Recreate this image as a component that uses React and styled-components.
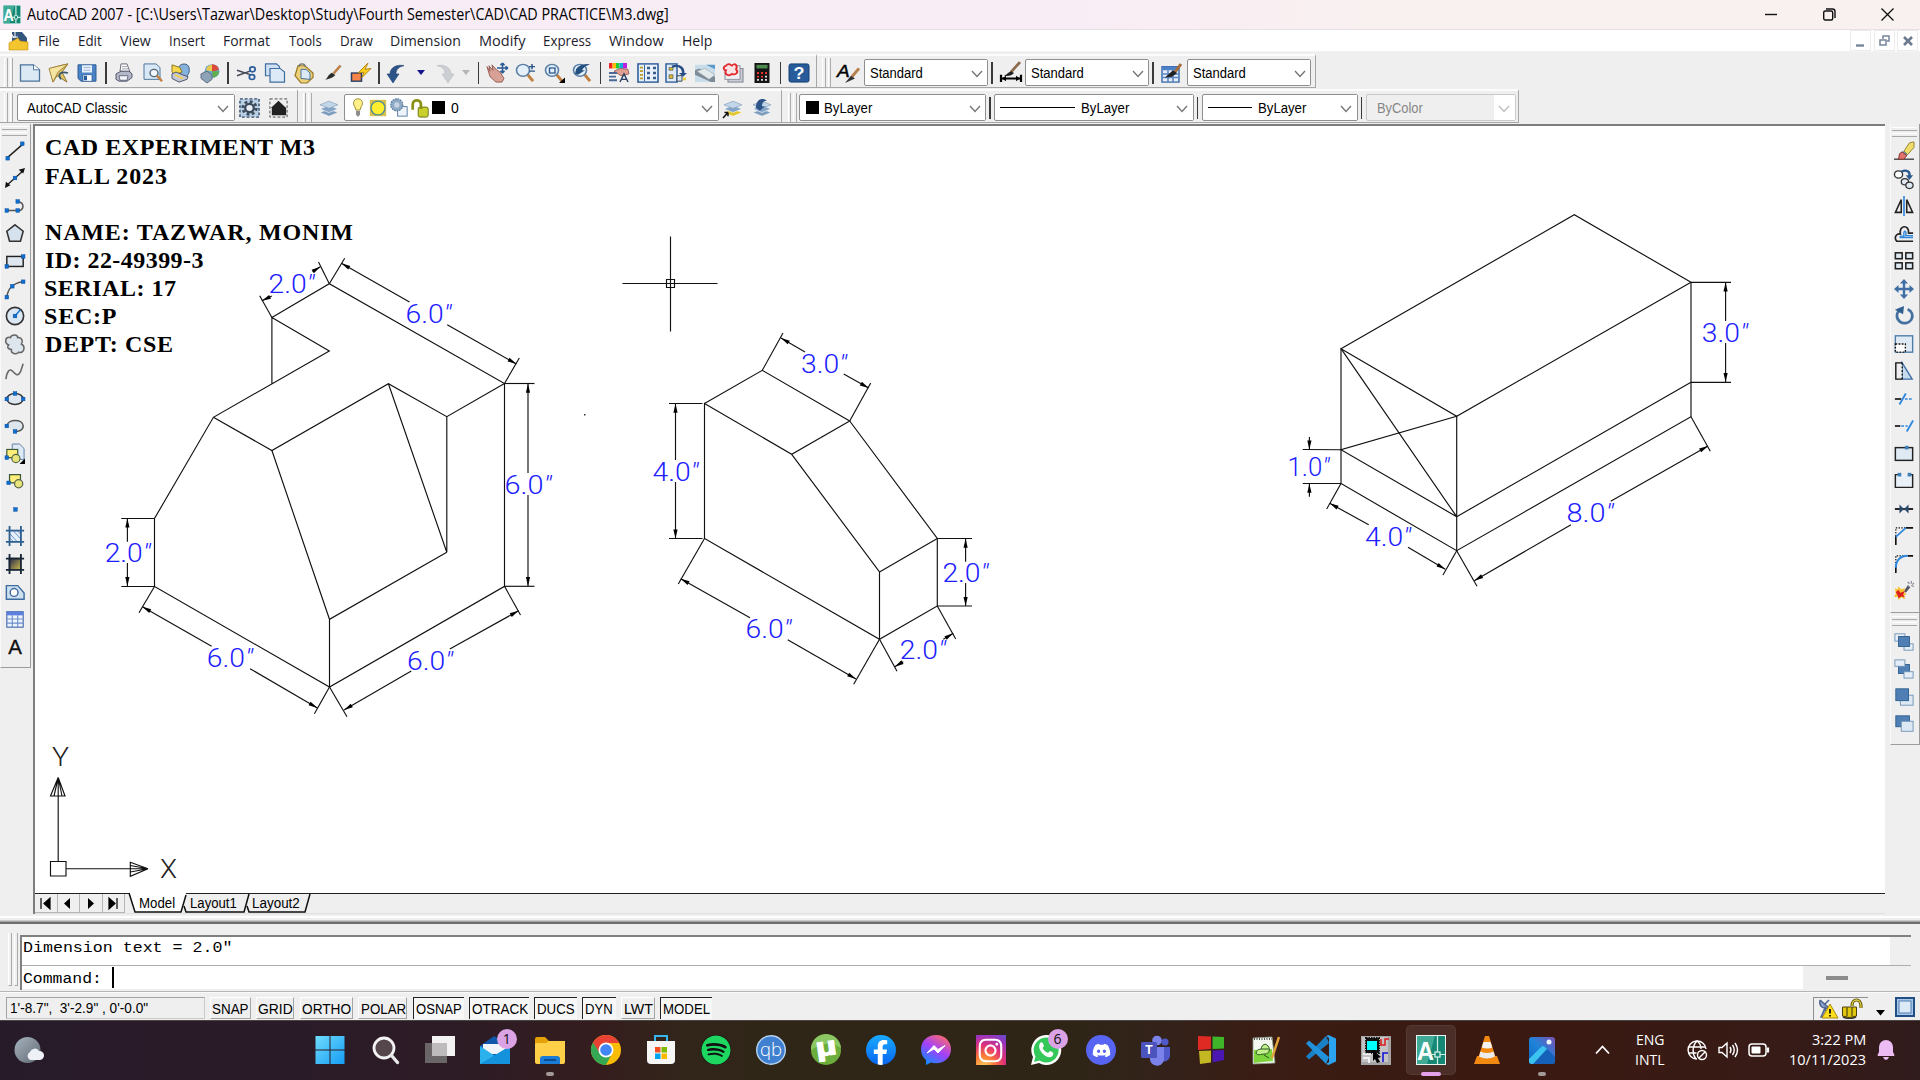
import React, { useLayoutEffect, useRef, useState } from "react";
import styled, { createGlobalStyle, css } from "styled-components";
import { FaDiscord, FaInstagram, FaSpotify, FaFacebookF } from "react-icons/fa";

const Global = createGlobalStyle`
  *, *::before, *::after { box-sizing: border-box; }
  html, body { margin: 0; padding: 0; overflow: hidden; }
  svg { display: block; flex: none; overflow: visible; }
`;

const ui = `"Open Sans", "Noto Sans", sans-serif`;
const sans = `"Liberation Sans", Arial, sans-serif`;

const Screen = styled.div`
  width: 1920px; height: 1080px; display: flex; flex-direction: column;
  background: #efefef; font-family: ${ui}; font-size: 15px; color: #000; overflow: hidden;
`;

/* ---------- text that is condensed or widened to a given advance ---------- */
const FitBox = styled.span`
  display: block; flex: none; width: ${p => p.$w}px; height: ${p => p.$lh || 20}px; line-height: ${p => p.$lh || 20}px;
  white-space: pre; font-size: ${p => p.$size || 15}px; font-family: ${p => p.$font || "inherit"};
  color: ${p => p.$color || "inherit"};
`;
const FitInner = styled.span`display: inline-block; transform-origin: 0 50%;`;
function Fit({ w, size, font, color, lh, children }) {
  const ref = useRef(null);
  const [scale, setScale] = useState(1);
  useLayoutEffect(() => {
    const natural = ref.current.offsetWidth;
    if (natural) setScale(w / natural);
  }, [w]);
  return (
    <FitBox $w={w} $size={size} $font={font} $color={color} $lh={lh}>
      <FitInner ref={ref} style={{ transform: `scaleX(${scale})` }}>{children}</FitInner>
    </FitBox>
  );
}

/* ---------- title and menu ---------- */
const TitleBar = styled.header`
  height: 29px; display: flex; align-items: center; padding-left: 3px; flex: none;
  background: linear-gradient(90deg, #f8edf6 0%, #f8edf5 55%, #f9f0f0 72%, #f9f0f0 100%);
`;
const TitleText = styled.div`margin-left: 6px; flex: 1; padding-bottom: 1px;`;
const WindowButtons = styled.div`display: flex; padding-right: 3px;`;
const WindowButton = styled.div`width: 58.5px; height: 29px; display: flex; align-items: center; justify-content: center;`;
const MenuBar = styled.nav`
  height: 23px; flex: none; background: #fff; display: flex; align-items: center; padding-left: 9px;
  border-top: 1px solid #e6dfe6; border-bottom: 1px solid #f3f3f3;
`;
const MenuItem = styled.div`margin-left: ${p => p.$gap}px; padding-bottom: 1px;`;
const DocButtons = styled.div`margin-left: auto; display: flex; gap: 2.5px; padding-right: 2px;`;
const DocButton = styled.div`
  width: 21px; height: 21px; background: #fff; border: 1px solid #ececec; display: flex; align-items: center; justify-content: center;
`;

/* ---------- toolbars ---------- */
const ToolRow = styled.div`height: 36px; flex: none; display: flex; align-items: stretch; padding-top: ${p => p.$top || 1}px;`;
const Toolbar = styled.div`
  height: 34px; width: ${p => p.$w}px; display: flex; align-items: center; flex: none; padding-top: 2px;
  border-top: 2px solid #fcfcfc; border-bottom: 1.5px solid #a6a6a6; border-right: 1.5px solid #a6a6a6;
`;
const Grip = styled.div`
  flex: none; width: ${p => p.$w || 16}px; height: 29px; display: flex; gap: 2px; padding-left: ${p => p.$pad ?? 4}px;
  &::before, &::after { content: ""; width: 3.5px; border-left: 1.5px solid #fff; border-right: 1.5px solid #acacac; }
`;
const Cell = styled.div`width: ${p => p.$w || 28.6}px; height: 26px; flex: none; display: flex; align-items: center; justify-content: center;`;
const Sep = styled.div`width: ${p => p.$w || 8}px; flex: none; height: 22px; display: flex; justify-content: center; &::before { content: ""; width: 1.5px; background: #3a3a3a; }`;
const Select = styled.div`
  width: ${p => p.$w}px; height: 27px; flex: none; background: ${p => (p.$off ? "#efefef" : "#fff")};
  border: 1.5px solid ${p => (p.$off ? "#c9c9c9" : "#8f8f8f")}; border-radius: 2px;
  display: flex; align-items: center; padding-left: ${p => p.$pad || 5}px;
`;
const Chevron = styled.div`
  margin-left: auto; width: 21px; align-self: stretch; display: flex; align-items: center; justify-content: center;
  background: #fff; padding-top: 2px;
`;
const Swatch = styled.i`width: 13px; height: 13px; background: #000; flex: none;`;
const LineSample = styled.i`height: 1.5px; width: ${p => p.$w}px; background: #000; flex: none;`;
const Gap = styled.i`flex: none; width: ${p => p.$w}px;`;

/* ---------- work area ---------- */
const Work = styled.div`height: 790px; flex: none; display: flex;`;
const Dock = styled.aside`width: ${p => p.$w}px; flex: none; padding-left: ${p => p.$pad || 0}px;`;
const SideBar = styled.div`
  width: ${p => p.$w}px; height: ${p => p.$h}px; display: flex; flex-direction: column; align-items: center;
  border-right: 1.5px solid #9c9c9c; border-bottom: 1.5px solid #9c9c9c; border-left: 1px solid #fafafa;
  padding-top: ${p => p.$top || 2}px; padding-right: 2px;
`;
const SideGrip = styled.div`
  flex: none; width: 25px; height: ${p => p.$h || 11}px; display: flex; flex-direction: column; gap: 2px;
  &::before, &::after { content: ""; height: 4px; border-top: 1.5px solid #fff; border-bottom: 1.5px solid #a8a8a8; }
`;
const SideCell = styled.div`width: 26px; height: ${p => p.$h || 27.55}px; flex: none; display: flex; align-items: center; justify-content: center;`;
const Center = styled.main`width: 1852px; flex: none; display: flex; flex-direction: column; border-left: 2px solid #7d7d7d; border-top: 2px solid #7d7d7d;`;
const Canvas = styled.div`height: 767px; background: #fff; flex: none;`;
const TabsRow = styled.div`height: 20.5px; display: flex; border-top: 1.5px solid #222; background: #efefef; border-bottom: 1px solid #e0e0e0;`;
const NavBtn = styled.div`width: 22.5px; height: 19px; border-right: 1px solid #b5b5b5; border-bottom: 1px solid #b5b5b5; display: flex; align-items: center; justify-content: center; flex: none; padding-right: 3px;`;
const Tab = styled.div`display: grid; width: ${p => p.$w}px; flex: none; margin-top: -1.5px; & > * { grid-area: 1 / 1; }`;
const TabLabel = styled.div`padding: 1px 0 0 ${p => p.$pad}px;`;

/* ---------- command window and status ---------- */
const CommandDock = styled.section`
  flex: none; display: flex; padding: 11px 9px 0 8px; border-top: 2px solid #6f6f6f; height: 70px;
  border-bottom: 1.5px solid #b5b5b5;
`;
const Splitter = styled.div`height: 7.5px; flex: none; background: linear-gradient(#efefef 0 2px, #fff 2px 4px, #efefef 4px 6px, #a5a5a5 7px);`;
const CommandGrip = styled.div`width: 12px; height: 53px; margin-top: -2px; display: flex; gap: 2px; &::before, &::after { content: ""; width: 4px; border-left: 1.5px solid #fff; border-right: 1.5px solid #aaa; border-bottom: 1px solid #aaa; }`;
const CommandBox = styled.div`width: 1891px; height: 55px; border-left: 2px solid #808080; border-top: 2px solid #808080; display: flex; flex-direction: column;`;
const CommandLine = styled.div`
  height: ${p => p.$h}px; flex: none; display: flex; align-items: flex-start; background: #fff; padding-left: 0.5px;
  border-bottom: ${p => (p.$rule ? "1.5px solid #adadad" : "none")};
`;
const CommandText = styled.div`padding-top: ${p => p.$top}px;`;
const Caret = styled.i`width: 2px; height: 21px; background: #000; margin: 1px 0 0 11px;`;
const ScrollEnd = styled.div`margin-left: auto; width: ${p => p.$w}px; height: 100%; background: #efefef; display: flex; align-items: center; justify-content: ${p => p.$j || "center"};`;
const ScrollThumb = styled.i`width: 22px; height: 4px; background: #8b8b8b; margin-left: 23px;`;
const StatusBar = styled.footer`height: 28px; flex: none; display: flex; padding: 4px 5px 0 6px; align-items: flex-start; border-top: 1px solid #fafafa;`;
const Coords = styled.div`width: 199px; height: 22px; border: 1.5px solid #a3a3a3; border-right-color: #c9c9c9; border-bottom-color: #c9c9c9; padding: 0.500px 0 0 2.5px; flex: none; margin-right: 4.5px;`;
const Toggle = styled.div`
  width: ${p => p.$w}px; height: 22px; flex: none; margin-right: ${p => p.$gap}px; padding: ${p => (p.$on ? "1.5px 0 0 2px" : "1px 0 0 1.5px")};
  ${p => p.$on
    ? css`border-left: 1.5px solid #222; border-top: 1.5px solid #222; background: #f7f7f7;`
    : css`border-right: 1.5px solid #a5a5a5; border-bottom: 1.5px solid #a5a5a5; border-top: 1px solid #fff; border-left: 1px solid #fff;`}
`;
const Tray = styled.div`margin-left: auto; width: 55px; height: 23px; border-left: 1.5px solid #909090; border-top: 1.5px solid #909090; display: flex; align-items: center; gap: 3px; padding-left: 3px;`;

/* ---------- taskbar ---------- */
const Taskbar = styled.footer`
  height: 60px; flex: none; display: flex; align-items: center; color: #fff; border-top: 1px solid #4a4443;
  background: linear-gradient(90deg, #281b29 0, #2a1b28 300px, #2e1c25 480px, #351d1e 600px, #32251a 680px, #2f2617 780px, #2f2517 1080px, #33221a 1160px, #3a1d14 1260px, #3a1911 1500px, #381b16 1750px, #301b1c 1920px);
`;
const Weather = styled.div`width: 302.7px; padding-left: 13px; flex: none;`;
const TaskItem = styled.div`
  position: relative; width: 55.07px; height: 56px; flex: none; display: flex; align-items: center; justify-content: center;
`;
const Active = styled.div`width: 50px; height: 50px; border-radius: 5px; display: flex; align-items: center; justify-content: center; background: rgba(255,255,255,.09); border: 1px solid rgba(255,255,255,.06);`;
const Running = styled.i`position: absolute; left: 50%; bottom: 2px; transform: translateX(-50%); width: ${p => (p.$wide ? 20 : 8)}px; height: 4px; border-radius: 2px; background: ${p => (p.$wide ? "#e3a1ea" : "#a39a98")};`;
const Badge = styled.b`
  position: absolute; left: 29px; top: 7px; width: 20px; height: 20px; border-radius: 50%; background: #dba2e5; color: #111;
  font: 400 14px/20px ${ui}; text-align: center;
`;
const Round = styled.div`width: 30px; height: 30px; border-radius: ${p => p.$r || "50%"}; background: ${p => p.$bg}; display: flex; align-items: ${p => p.$align || "center"}; justify-content: center; overflow: hidden; color: #fff;`;
const SysTray = styled.div`margin-left: auto; display: flex; align-items: center; padding-right: 25px;`;
const TwoLines = styled.div`width: ${p => p.$w}px; display: flex; flex-direction: column; align-items: ${p => p.$a || "center"};`;

/* ---------- toolbar icon drawings (22 x 22) ---------- */
const N = "#2d5a8e";
const Mag = ({ children }) => (<>
  <path d="M13 12l6 8" stroke="#c08040" strokeWidth="3" /><circle cx="9" cy="8" r="6.500" fill="#e4effa" stroke="#5b7ea5" strokeWidth="1.600" />{children}</>);
const Layers = ({ last = "#7c9cbc" }) => (<g>
  <path d="M2 16l9-4 9 4-9 4z" fill={last} stroke="#fff" strokeWidth=".5" /><path d="M2 12l9-4 9 4-9 4z" fill="#84a4c6" stroke="#fff" strokeWidth=".6" />
  <path d="M2 7.500l9-4 9 4-9 4z" fill="#c2d6ea" stroke="#7793b3" strokeWidth=".6" /></g>);
const Brush = () => (<><path d="M12 12L20 2" stroke="#b9804c" strokeWidth="3" /><path d="M2 20c3-1 3-6 8-9l4 3c-3 4-8 5-12 6z" fill="#2b2b2b" /></>);
const Pt = ({ x, y }) => <rect x={x - 2} y={y - 2} width="4" height="4" fill="#0f6fd0" stroke="#0a4a9a" strokeWidth=".5" />;

const icons = {
  newf: <><path d="M1.500 2h13l6 5.500V20h-19z" fill="#dbe9f5" stroke="#4b7299" strokeWidth="1.300" /><path d="M14.500 2v5.500h6" fill="#fff" stroke="#4b7299" /></>,
  open: <><path d="M2 6l10-3 8-2-6 9 5 11-10-7-4 7z" fill="#e0c46a" stroke="#8f7228" /><path d="M1 6l4 15 5-11 10-9-8 2z" fill="#f5e4a2" stroke="#a28435" /><path d="M13 18c-4-6 0-9 7-7" fill="none" stroke="#3b5770" strokeWidth="1.800" /></>,
  save: <><path d="M2 2h18v18H5l-3-3z" fill="#4c83c4" stroke="#2b5b94" /><rect x="6" y="2.500" width="10" height="8" fill="#e9f1fa" /><path d="M7.500 5h7M7.500 8h7" stroke="#9db7d3" /><rect x="7" y="13" width="9" height="7" fill="#fff" stroke="#2b5b94" strokeWidth=".7" /><rect x="8" y="14" width="3" height="5" fill="#2b5b94" /></>,
  print: <><path d="M7 9L8 1h6l3 9z" fill="#fff" stroke="#667" /><path d="M9 4h5M9 6.500h6" stroke="#99a" /><path d="M3 12l5-3h8l3 3v4l-5 4H6l-3-2z" fill="#b4b8ca" stroke="#4d5367" /><path d="M6 14h9l-1 5H7z" fill="#f4f6fb" stroke="#4d5367" strokeWidth=".8" /></>,
  preview: <><path d="M2 1h12l4 4v13H2z" fill="#d9e8f6" stroke="#4b7299" /><circle cx="12" cy="11" r="4" fill="#f4f9ff" stroke="#567" strokeWidth="1.400" /><path d="M15 14l5 6" stroke="#c08040" strokeWidth="2.500" /></>,
  publish: <><path d="M9 4c2-4 9-4 10 1s-1 9-3 10l-8-4z" fill="#85b2dc" stroke="#33567c" /><path d="M2 2l8 3 2 5-7 3-3-3z" fill="#f7d84a" stroke="#8a7420" /><path d="M2 12l4-2 9 4 3 1-1 3-8 3-7-4z" fill="#c4c8da" stroke="#4d5367" /><path d="M5 13l8 4" stroke="#f0d14c" strokeWidth="2" /></>,
  globe: <><circle cx="13" cy="9" r="7.500" fill="#69a8cf" /><path d="M13 1.500a7.500 7.500 0 017 6l-7 2z" fill="#d94a3a" /><path d="M20 9a7.500 7.500 0 01-6 7l-1-7z" fill="#5fb04c" /><path d="M13 2a7 7 0 00-6 6l6 1z" fill="#e9c94c" /><path d="M2 12l6-3 5 4v5l-5 4-6-5z" fill="#8fa3b8" stroke="#5c6a80" /></>,
  cut: <><path d="M2 8l14 5M2 14l13-5" stroke="#444b58" strokeWidth="1.600" /><circle cx="17.500" cy="7" r="2.700" fill="none" stroke="#2f5f9b" strokeWidth="1.800" /><circle cx="17" cy="15.500" r="2.700" fill="none" stroke="#2f5f9b" strokeWidth="1.800" /></>,
  copy: <><path d="M1.500 1h11l3 3v10h-14z" fill="#cfe1f2" stroke="#3f6da0" strokeWidth="1.200" /><path d="M6 6h10l4.500 4v11H6z" fill="#dceaf7" stroke="#3f6da0" strokeWidth="1.200" /></>,
  paste: <><path d="M2 14L5 3h7l8 8v5l-6 6H8z" fill="#ecd07a" stroke="#9c7a28" strokeWidth="1.300" /><path d="M8 7h5l4 4v7l-9-1z" fill="#dceaf7" stroke="#3f6da0" /><path d="M6 4c0-4 6-4 6 0" fill="none" stroke="#777" strokeWidth="1.500" /></>,
  match: <g transform="translate(2 1) scale(.88)"><Brush /></g>,
  block: <><rect x="1.500" y="11" width="10" height="9" fill="#f5834a" stroke="#263d63" strokeWidth="1.500" /><path d="M18 0L8 11l6-1-2 6 9-10-6 1z" fill="#ffd21f" stroke="#b3830d" /></>,
  undo: <path d="M1 12h3c0-7 7-11 14-9-5 1-8 4-8 9h3l-6 10z" fill="#2c5488" stroke="#1f3f6b" strokeWidth=".6" />,
  redo: <path d="M21 12h-3c0-7-7-11-14-9 5 1 8 4 8 9H9l6 10z" fill="#cbced3" stroke="#b5b8bd" strokeWidth=".6" />,
  pan: <><path d="M1 4l3 5-1-6 4 5-1-6 5 6 3 2 4 7-2 4h-6L4 15z" fill="#d7a196" stroke="#8e4f49" strokeWidth=".9" /><path d="M16.500 0v11M11 5.500h11M16.500 0l-2 2.500m2-2.500l2 2.500m-2 8.500l-2-2.500m2 2.500l2-2.500m3.500-3l-2.500-2m2.500 2l-2.500 2" stroke="#2b5b94" strokeWidth="1.500" fill="none" /></>,
  zoomrt: <><Mag /><path d="M15 4h6M18 1v6M15 9h6" stroke="#2c5488" strokeWidth="1.500" /></>,
  zoomwin: <><Mag><rect x="6.500" y="5.500" width="5.500" height="5.500" fill="none" stroke={N} strokeWidth="1.400" /></Mag><path d="M22 16v6h-6z" fill="#000" /></>,
  zoomprev: <><Mag /><path d="M4 12l1-5c2-4 6-6 14-6-4 2-7 4-8 7h3l-7 5z" fill="#24507f" /></>,
  props: <><rect x="1" y="0" width="3.500" height="6" fill="#e22" /><rect x="4.500" y="0" width="3.500" height="6" fill="#fb0" /><rect x="8" y="0" width="3.500" height="6" fill="#2c3" /><rect x="11.500" y="0" width="3.500" height="6" fill="#1ad" /><rect x="15" y="0" width="4" height="6" fill="#b2d" /><path d="M6 9l6-3 8 1 1 5-8 2z" fill="#e0a193" stroke="#8e4f49" strokeWidth=".8" /><path d="M1 11h8M1 15h7M1 19h8" stroke="#4a6898" strokeWidth="2" /><path d="M12 21l4-9 4 9m-6-3h5" fill="none" stroke="#2a3d63" strokeWidth="1.400" /></>,
  dcenter: <><rect x="1" y="1" width="20" height="20" fill="#e8f1fb" stroke="#2f5f9b" strokeWidth="1.600" /><path d="M7.500 2v18" stroke="#2f5f9b" /><path d="M3 5h3M3 9h3M3 13h3M3 17h3" stroke="#b99a22" strokeWidth="2" /><path d="M10 4h3v3h-3zM16 4h3v3h-3zM10 9.500h3v3h-3zM16 9.500h3v3h-3zM10 15h3v3h-3zM16 15h3v3h-3z" fill="#3b5d8c" /></>,
  toolpal: <><rect x="1" y="1" width="11" height="20" fill="#dfeaf6" stroke="#2f5f9b" strokeWidth="1.500" /><path d="M4 5h4v3H4zM4 13h4v4H4z" fill="#d9b92f" stroke="#345" strokeWidth=".6" /><path d="M7 4c9-3 12 3 11 9" fill="none" stroke="#274f86" strokeWidth="2.600" /><path d="M14 11h8l-4 4z" fill="#274f86" /><path d="M12 14h5v6h-5z" fill="#d9e6f4" stroke="#345" /><path d="M18 16h3v3h-3z" fill="#ecd33d" /></>,
  sheet: <><rect x="1" y="2" width="20" height="19" fill="#c8dcea" /><path d="M12 2l9 5V2z" fill="#5b9bc9" /><path d="M1 8l4-2 16 9v6h-4L1 13z" fill="#7f8a97" /><path d="M3 9l8-3 10 7-6 5z" fill="#e3e8ea" stroke="#9aa" strokeWidth=".6" /></>,
  markup: <><rect x="6" y="6" width="15" height="15" fill="#c9ccd4" stroke="#7d828e" /><rect x="3" y="3" width="15" height="15" fill="#eef0f4" stroke="#8b909c" /><path d="M4 3c3-4 5 0 6 0 3-4 6 0 4 4 3 3 0 7-4 5-3 3-8 1-6-4C1 8 1 4 4 3z" fill="#fbe3e3" stroke="#e2282e" strokeWidth="1.900" /></>,
  calc: <><rect x="3.500" y="0" width="15" height="22" fill="#151515" /><rect x="5.500" y="2" width="11" height="4" fill="#4a8a4c" /><path d="M6 10h2v2H6zM10 10h2v2h-2zM14 10h2v2h-2zM6 14h2v2H6zM10 14h2v2h-2z" fill="#e33" /><path d="M14 14h2v2h-2zM6 17.500h2v2H6zM10 17.500h2v2h-2zM14 17.500h2v2h-2z" fill="#ddd" /></>,
  help: <><rect x="1" y="1" width="20" height="20" rx="2" fill="#275b99" stroke="#123d70" /><text x="11" y="17.500" textAnchor="middle" fontFamily="Liberation Sans, sans-serif" fontWeight="700" fontSize="18" fill="#fff">?</text></>,
  tstyle: <><path d="M14 15l7-9" stroke="#b9804c" strokeWidth="3" /><path d="M7 22l6-8 4 3z" fill="#333" /><text x="-1" y="15" fontFamily="Liberation Sans, sans-serif" fontStyle="italic" fontSize="19" stroke="#000" strokeWidth=".5">A</text></>,
  dstyle: <><path d="M11 10L20 -1" stroke="#8d6a4a" strokeWidth="2.800" /><path d="M4 14c3-1 4-4 7-5l3 2c-2 3-6 4-10 3z" fill="#222" /><path d="M1 13v8M21 13v8M1 17h20" stroke="#000" strokeWidth="2.200" /><path d="M2 17l4-3v6zM20 17l-4-3v6z" /></>,
  tbstyle: <><rect x="1" y="4" width="17" height="17" fill="#e3edf9" stroke="#3767aa" strokeWidth="1.400" /><rect x="1" y="4" width="17" height="4" fill="#4e80c8" /><path d="M1 12h17M1 16h17M7 8v13M12 8v13" stroke="#5c86c0" strokeWidth="1.600" /><path d="M14 10L20 1" stroke="#a66b38" strokeWidth="3" /><path d="M4 16l8-8 4 3-5 4z" fill="#222" /></>,
  gear: <><rect x="1" y="1" width="20" height="20" fill="#b9cfe3" stroke="#2f4c6c" strokeWidth="1.500" strokeDasharray="3 2" /><circle cx="11" cy="11" r="7" fill="none" stroke="#3c4b5c" strokeWidth="3" strokeDasharray="3 2.500" /><circle cx="11" cy="11" r="4.500" fill="#e8eef4" stroke="#3c4b5c" strokeWidth="2.400" /></>,
  home: <><rect x="2" y="1" width="18" height="20" fill="none" stroke="#444" strokeDasharray="3 2" /><path d="M3 11l8-8 8 8v8H4v-8z" fill="#222" /></>,
  layers: <Layers />,
  bulb: <><path d="M11 1c-5 0-7 5-4 9l1.500 4h5L15 10c3-4 1-9-4-9z" fill="#fff08a" stroke="#8c7b1a" /><path d="M8.500 15h5v4l-2.500 3-2.500-3z" fill="#8c8c8c" /></>,
  sun: <><path d="M1 1h20v20H1z" fill="#d8c14a" /><circle cx="11" cy="11" r="8.500" fill="#ffee30" stroke="#4d8a9c" strokeWidth="1.600" /></>,
  vp: <><rect x="10" y="10" width="11" height="11" fill="#eef4fb" stroke="#4b7299" /><circle cx="9" cy="8" r="7" fill="#8faac4" stroke="#56789c" strokeWidth="1.300" strokeDasharray="2 1" /><circle cx="9" cy="8" r="3" fill="#c5d5e5" /></>,
  lock: <><rect x="9" y="10" width="11" height="11" rx="2" fill="#c9d02e" stroke="#656b0d" /><path d="M3 13V7c0-6 9-6 9 0v5" fill="none" stroke="#8a9114" strokeWidth="3" /></>,
  layprev: <><Layers last="#e3c62c" /><path d="M1 22l5-6m0 0H2.500M6 16v4" stroke="#111" strokeWidth="1.500" /></>,
  layback: <><Layers /><path d="M5 10c0-9 7-11 11-7-4 0-5 3-5 6h3l-5 5-5-4z" fill="#2c5488" /></>,
  line: <><path d="M3 18L19 4" stroke="#222" strokeWidth="1.600" /><Pt x="3" y="19" /><Pt x="19" y="3" /></>,
  xline: <><path d="M2 19L20 3" stroke="#222" strokeWidth="1.500" /><path d="M0 22l1-7 5 4zM22 0l-7 2 5 4z" fill="#111" /><Pt x="11" y="11" /></>,
  pline: <><path d="M2 16h11m0-10c10 0 8 12 0 10" stroke="#555" strokeWidth="1.700" fill="none" /><Pt x="2" y="16" /><Pt x="14" y="16" /><Pt x="14" y="6" /></>,
  polygon: <path d="M11 2l9 7-3 11H5L2 9z" fill="#d5e2ee" stroke="#333" strokeWidth="1.700" />,
  rect: <><rect x="2" y="6" width="18" height="11" fill="#dfe8f1" stroke="#222" strokeWidth="1.600" /><Pt x="2" y="17" /><Pt x="20" y="6" /></>,
  arc: <><path d="M2 20C3 11 9 4 20 3" stroke="#555" strokeWidth="1.700" fill="none" /><Pt x="2" y="20" /><Pt x="8" y="8" /><Pt x="20" y="3" /></>,
  circle: <><circle cx="11" cy="11" r="9.500" fill="#dbe7f2" stroke="#333" strokeWidth="1.800" /><path d="M11 11l6-7" stroke="#0f6fd0" strokeWidth="1.600" /><Pt x="11" y="11" /></>,
  cloud: <path d="M4 12C-1 10 0 2 6 4c1-4 8-4 8 0 5-1 6 5 4 7 5 3 3 11-3 9-2 3-9 2-8-3-4 0-5-3-3-5z" fill="#dde5ed" stroke="#666" strokeWidth="1.700" />,
  spline: <path d="M1 20c1-8 4-12 7-9s6 7 9 1l3-9" fill="none" stroke="#666" strokeWidth="1.700" />,
  ellipse: <><ellipse cx="11" cy="11" rx="9" ry="6" fill="#dfe8f1" stroke="#333" strokeWidth="1.600" /><Pt x="2" y="11" /><Pt x="11" y="5" /><Pt x="20" y="11" /></>,
  earc: <><path d="M2 11c1-8 18-8 18 0 0 5-6 6-9 6" fill="#dde5ed" stroke="#555" strokeWidth="1.700" /><Pt x="2" y="11" /><Pt x="11" y="17" /></>,
  insert: <><path d="M8 0h8l5 5v12H8z" fill="#dceaf7" stroke="#56789c" /><rect x="2" y="6" width="12" height="9" fill="#ffef7a" stroke="#3b5a35" strokeWidth="1.300" /><circle cx="12" cy="16" r="4.500" fill="#e9e37b" stroke="#56684a" strokeWidth="1.300" /><Pt x="2" y="15" /><path d="M22 16v6h-6z" /></>,
  mblock: <><rect x="5" y="4" width="12" height="9" fill="#ffef7a" stroke="#3b5a35" strokeWidth="1.400" /><circle cx="15" cy="14" r="4.500" fill="#e9e37b" stroke="#56684a" strokeWidth="1.400" /><Pt x="4" y="13" /></>,
  point: <Pt x="11.5" y="11.5" />,
  hatch: <><rect x="4" y="4" width="14" height="14" fill="#e5eefa" /><path d="M5 8l9 10M5 13l5 5M8 4l10 11M13 4l5 6" stroke="#4b82bd" strokeWidth=".9" /><path d="M1 5h20M1 17.500h20M5 0v22M17.500 0v22" stroke="#2f5f8e" strokeWidth="2" /></>,
  gradient: <><defs><linearGradient id="gr" x1="0" y1="0" x2="1" y2="1"><stop offset="0" stopColor="#161b4a" /><stop offset="1" stopColor="#d9c54a" /></linearGradient></defs><rect x="4" y="4" width="14" height="14" fill="url(#gr)" /><path d="M1 5h20M1 17.500h20M5 0v22M17.500 0v22" stroke="#172536" strokeWidth="2" /></>,
  region: <><path d="M1.500 4H14l7 8v7H1.500z" fill="#cfe0f0" stroke="#3f6da0" strokeWidth="1.600" /><circle cx="10" cy="11.500" r="4.300" fill="#fff" stroke="#3f6da0" strokeWidth="1.600" /></>,
  table: <><rect x="2" y="3" width="18" height="17" fill="#eef4fc" stroke="#4a6fae" strokeWidth="1.300" /><rect x="2" y="3" width="18" height="4" fill="#5c7fe0" /><path d="M2 11h18M2 15.500h18M8 7v13M14 7v13" stroke="#6a8fcd" strokeWidth="1.200" /></>,
  mtext: <text x="11" y="19" textAnchor="middle" fontFamily="Liberation Sans, sans-serif" fontSize="23" fill="#111" stroke="#111" strokeWidth=".4" textLength="15" lengthAdjust="spacingAndGlyphs">A</text>,
  erase: <><path d="M0 20h22" stroke="#333" strokeWidth="1.400" /><path d="M11 11l6-9 5-1v6l-7 8z" fill="#f0dd6a" stroke="#8a7d33" /><path d="M10 11l5 4-2 2-6-4z" fill="#5f86b5" /><path d="M6 14l3-2 5 4-3 4H5z" fill="#e0736a" stroke="#802f2a" /></>,
  copy2: <><ellipse cx="5" cy="6" rx="4.500" ry="4" fill="#fff" stroke="#333" strokeWidth="1.500" /><path d="M8 3c6-3 10 0 9 5" fill="none" stroke={N} strokeWidth="2.600" /><path d="M13 7h8l-4 5z" fill={N} /><ellipse cx="12" cy="14" rx="4" ry="3.500" fill="#dfe8f1" stroke="#333" strokeWidth="1.400" /><ellipse cx="17" cy="18" rx="4" ry="3.500" fill="#dfe8f1" stroke="#333" strokeWidth="1.400" /></>,
  mirror: <><path d="M8 4v14H1.500zM14 4v14h6.500z" fill="#eee" stroke="#222" strokeWidth="1.700" /><path d="M11 0v22" stroke="#2f86dd" strokeWidth="1.800" /></>,
  offset: <><path d="M21 19H3c-4-5 1-9 4-8-2-10 10-11 9-1h5" fill="none" stroke="#222" strokeWidth="1.800" /><path d="M21 15H7c-1-2 1-2 4-1-1-8 3-8 2-1h8" fill="none" stroke="#2f86dd" strokeWidth="1.600" /></>,
  array: <g fill="#dfe8f1" stroke="#222" strokeWidth="1.700"><rect x="1.500" y="2" width="7.500" height="6.500" /><rect x="13" y="2" width="7.500" height="6.500" /><rect x="1.500" y="13" width="7.500" height="6.500" /><rect x="13" y="13" width="7.500" height="6.500" /></g>,
  move: <><path d="M11 3v16M3 11h16" stroke="#3f6fa5" strokeWidth="2.600" /><path d="M11 0l4.500 5h-9zM11 22l4.500-5h-9zM0 11l5-4.500v9zM22 11l-5-4.500v9z" fill="#3f6fa5" /></>,
  rotate: <><path d="M6 5a8.500 8 0 109-1.500" fill="none" stroke="#44719f" strokeWidth="3" /><path d="M1 4L11 0l-1 9z" fill="#2f5f8e" /></>,
  scale: <><rect x="1.500" y="2" width="19" height="18" fill="#dfeaf5" stroke="#4b7da8" strokeWidth="1.500" /><rect x="1.500" y="11" width="11" height="9" fill="#fff" stroke="#111" strokeWidth="1.500" strokeDasharray="2 1.500" /></>,
  stretch: <><path d="M9 2l11 18H9z" fill="#c7dbef" stroke="#3f6fa5" strokeWidth="1.500" /><path d="M9 2H2v18h7" fill="#eee" stroke="#111" strokeWidth="1.500" /><path d="M9 2v18" stroke="#111" strokeDasharray="2 2" strokeWidth="1.500" /></>,
  trim: <><path d="M1 11h7" stroke="#111" strokeWidth="1.800" /><path d="M12 11h9" stroke="#2f86dd" strokeDasharray="3 1.500" strokeWidth="1.500" /><path d="M6 17l7-12" stroke="#2f86dd" strokeWidth="2" /></>,
  extend: <><path d="M1 11h6" stroke="#111" strokeWidth="1.800" /><path d="M8 11h7" stroke="#2f86dd" strokeDasharray="3 1.500" strokeWidth="1.500" /><path d="M14 17l7-12" stroke="#2f86dd" strokeWidth="2" /></>,
  breakpt: <><rect x="1.500" y="4" width="19" height="14" fill="#dfeaf5" stroke="#222" strokeWidth="1.600" /><rect x="12" y="2" width="4" height="4" fill="#3f7fb5" /></>,
  brk: <><path d="M7 4H1.500v14h19V4H16" fill="#e9f0f7" stroke="#222" strokeWidth="1.600" /><rect x="4" y="2" width="4" height="4" fill="#3f7fb5" /><rect x="15" y="2" width="4" height="4" fill="#3f7fb5" /></>,
  join: <><path d="M1 11h20" stroke="#111" strokeWidth="2" /><path d="M6 6l5 5-5 5zM16 6l-5 5 5 5z" fill="#2c4a6b" /></>,
  chamfer: <><path d="M2 21V11M13 2h8" stroke="#111" strokeWidth="1.800" /><path d="M2 11V2h11" fill="none" stroke="#111" strokeDasharray="1.500 1.500" strokeWidth="1.300" /><path d="M2 12L13 2" stroke="#2f86dd" strokeWidth="2" /></>,
  fillet: <><path d="M2 21v-7M15 2h6" stroke="#111" strokeWidth="1.800" /><path d="M2 13V2h12" fill="none" stroke="#111" strokeDasharray="1.500 1.500" strokeWidth="1.300" /><path d="M2 15C2 7 7 2 15 2" fill="none" stroke="#2f86dd" strokeWidth="2.200" /></>,
  explode: <><path d="M11 11l4-6 3 2-5 6z" fill="#556" /><path d="M15 1l2 2M19 0v3M22 2l-2 2M22 6l-3-1M15 5l2 1" fill="none" stroke="#889" strokeWidth="1.300" /><path d="M1 8l3 1 1-3 3 3 4-1-1 4 3 3-3 1 1 4-4-2-3 3-1-4-4 1 2-4z" fill="#f7c22f" /><path d="M2 12l3-2 2 3 5-2-2 4 2 3-4-1-3 2-1-3z" fill="#dc1f1f" /></>,
  front: <><rect x="1" y="2" width="11" height="8" fill="#e5eef7" stroke="#6f93b5" /><rect x="11" y="13" width="10" height="7" fill="#e5eef7" stroke="#6f93b5" /><rect x="5" y="5" width="12" height="11" fill="#4f7fb5" stroke="#2f5f8e" /></>,
  back: <><rect x="5" y="6" width="12" height="10" fill="#4f7fb5" stroke="#2f5f8e" /><rect x="1" y="1" width="11" height="7" fill="#e5eef7" stroke="#6f93b5" /><rect x="11" y="14" width="10" height="7" fill="#e5eef7" stroke="#6f93b5" /></>,
  above: <><rect x="7" y="9" width="14" height="11" fill="#dce8f3" stroke="#6f93b5" /><rect x="2" y="2" width="14" height="13" fill="#4f7fb5" stroke="#2f5f8e" /></>,
  under: <><rect x="2" y="2" width="15" height="12" fill="#4f7fb5" stroke="#2f5f8e" /><rect x="8" y="8" width="13" height="11" fill="#dce8f3" stroke="#6f93b5" /></>,
};
const Icon = ({ n, size = 22, h = 20 }) => (
  <svg width={size} height={h} viewBox="0 0 22 22" preserveAspectRatio="none">{icons[n]}</svg>
);
const Down = ({ color = "#777" }) => <svg width="12" height="8" viewBox="0 0 12 8"><path d="M1 1l5 5.500L11 1" fill="none" stroke={color} strokeWidth="1.400" /></svg>;
const Tri = ({ color = "#111", s = 8 }) => <svg width={s} height="5" viewBox="0 0 8 5"><path d="M0 0h8L4 5z" fill={color} /></svg>;

function AcadLogo({ w, h, plain }) {
  return (
    <svg width={w} height={h} viewBox="0 0 30 30" preserveAspectRatio="none">
      <rect width="30" height="30" fill="#e8f5f1" /><rect x="1" y="1" width="28" height="28" fill="#148775" />
      <path d="M1 1h18l-8 28H1z" fill="#40aa97" />
      <text x="1" y="25" fontFamily="Liberation Sans, sans-serif" fontWeight="700" fontSize="26" textLength="17" lengthAdjust="spacingAndGlyphs" fill="#fff">A</text>
      <path d="M21.500 1v28M12 19.500h17" stroke="#cdeee4" strokeWidth={plain ? 2 : 1.200} /><rect x="19" y="17" width="5" height="5" fill="#148775" stroke="#cdeee4" strokeWidth="1.300" />
    </svg>
  );
}

/* ---------- the drawing ---------- */
const Sheet = styled.svg`
  .edge { fill: none; stroke: #111; stroke-width: 1.15; }
  .note { font: 700 24px "Liberation Serif", "Times New Roman", serif; fill: #000; }
  .dim { font: 300 26px Roboto, sans-serif; fill: #2020ff; }
  .inch { font-style: italic; }
  .ucs { font: 300 25px Roboto, sans-serif; fill: #222; }
`;
const poly = pts => "M" + pts.map(p => p.join(" ")).join("L");
const head = (tip, from) => {
  const dx = from[0] - tip[0], dy = from[1] - tip[1], l = Math.hypot(dx, dy) || 1, u = dx / l, v = dy / l, n = 9, w = 2.1;
  return `M${tip[0]} ${tip[1]}L${tip[0] + u * n - v * w} ${tip[1] + v * n + u * w}L${tip[0] + u * n + v * w} ${tip[1] + v * n - u * w}Z`;
};
const [A, B, C, D, E, F, G, H, I, J, K, L, M, NN, O] = [[329.3, 283.7], [271.9, 317.5], [329.3, 351], [271.9, 384], [213.4, 417.3], [271.9, 450.5], [388.4, 383.7], [446.8, 416.7], [504.5, 383.5], [154.5, 518.5], [154.5, 586.5], [329.5, 687], [329.5, 619.3], [446.8, 552.3], [504.5, 586.3]];
const [a, b, c, d, e, f, g, h, i] = [[704.5, 403.5], [762.3, 370.3], [849.7, 421], [791.7, 454.3], [704.5, 538.5], [879.5, 639.3], [879.5, 572], [937.3, 538.5], [937.3, 606]];
const [p, q, r, s, t, u, v, w, x, y] = [[1574.3, 214.7], [1691, 282.3], [1456.7, 416.3], [1341, 348.7], [1341, 449.7], [1341, 483.5], [1456.7, 550.7], [1456.7, 516.7], [1691, 382.3], [1691, 416.7]];
const edges = [
  [B, A, I, O, L, K, J, E, C, B, D], [E, F, G, H, I], [G, NN, H], [F, M, NN], [M, L],
  [a, b, c, d, a, e, f, i, h, c], [d, g, f], [g, h],
  [s, p, q, r, s, u, v, y, q], [s, w, t, r, v], [w, x],
];
const dims = [
  { ext: [[A, [318.5, 262]], [B, [259.7, 295.7]]], seg: [[[320.3, 266.7], [312.6, 271.7]], [[261.9, 300.7], [271.9, 296]]], t: "2.0", x: 268.5, w: 46, y: 293.3 },
  { ext: [[A, [344.7, 258.3]], [I, [519.3, 358]]], seg: [[[341.4, 263.3], [409.5, 302]], [[516.4, 364], [447.2, 324.7]]], t: "6.0", x: 405.5, w: 46, y: 323 },
  { ext: [[I, [534.5, 383.5]], [O, [534.5, 586.3]]], seg: [[[528, 383.7], [528, 473]], [[528, 586], [528, 495]]], t: "6.0", x: 504.5, w: 47, y: 494 },
  { ext: [[J, [121.3, 518.5]], [K, [121.3, 586.5]]], seg: [[[127.4, 518.5], [127.4, 541.7]], [[127.4, 586], [127.4, 563]]], t: "2.0", x: 104.7, w: 46, y: 562 },
  { ext: [[K, [139, 612.7]], [L, [314.4, 713.7]]], seg: [[[142.4, 606.7], [211.6, 646.3]], [[317.4, 708], [250, 668.7]]], t: "6.0", x: 206.8, w: 46, y: 667 },
  { ext: [[L, [347, 716.7]], [O, [520.5, 615]]], seg: [[[344, 710], [411.3, 671]], [[518.6, 610.7], [449.8, 649]]], t: "6.0", x: 407, w: 46, y: 670 },
  { ext: [[b, [783, 333]], [c, [870.7, 383]]], seg: [[[781, 338], [805, 352]], [[868.7, 388], [843.7, 374]]], t: "3.0", x: 801, w: 46, y: 373 },
  { ext: [[[702.5, 403.5], [669, 403.5]], [[702.5, 538.5], [669, 538.5]]], seg: [[[675.5, 403.7], [675.5, 460]], [[675.5, 538.5], [675.5, 482]]], t: "4.0", x: 652.5, w: 46, y: 480.7 },
  { ext: [[e, [678.3, 584]], [f, [853.7, 684.3]]], seg: [[[680.7, 578.7], [750, 617.7]], [[856, 679], [787.7, 639.7]]], t: "6.0", x: 745.5, w: 46, y: 638 },
  { ext: [[h, [972, 538.5]], [i, [972, 606]]], seg: [[[965.6, 538.7], [965.6, 561.7]], [[965.6, 606], [965.6, 583]]], t: "2.0", x: 942.4, w: 46, y: 582 },
  { ext: [[f, [897, 671.3]], [i, [955.7, 639]]], seg: [[[894.7, 666.7], [903.3, 661.7]], [[953.3, 633.3], [943.3, 639.3]]], t: "2.0", x: 899.8, w: 46, y: 659.3 },
  { ext: [[q, [1731, 282.3]], [x, [1731, 382.3]]], seg: [[[1725.6, 282.5], [1725.6, 321]], [[1725.6, 382], [1725.6, 343]]], t: "3.0", x: 1701.8, w: 46, y: 342 },
  { ext: [[t, [1302.7, 449.5]], [u, [1302.7, 483.5]]], seg: [[[1309.4, 449.5], [1309.4, 437]], [[1309.4, 483.7], [1309.4, 496.7]]], t: "1.0", x: 1287.5, w: 42, y: 475.8 },
  { ext: [[u, [1326.7, 509]], [v, [1443, 575]]], seg: [[[1329.7, 503.3], [1368.7, 524.7]], [[1445.3, 569.3], [1408, 547.3]]], t: "4.0", x: 1365, w: 46, y: 546 },
  { ext: [[v, [1477, 586.3]], [y, [1710.3, 451.3]]], seg: [[[1474.3, 580.7], [1571, 524.7]], [[1708, 446], [1610.7, 501.3]]], t: "8.0", x: 1566.5, w: 47, y: 522 },
];
const notes = [["CAD EXPERIMENT M3", 155.3, 45, 270], ["FALL 2023", 184, 45, 122], ["NAME: TAZWAR, MONIM", 240, 45, 308], ["ID: 22-49399-3", 267.5, 45, 158.5], ["SERIAL: 17", 296.3, 44, 132], ["SEC:P", 323.5, 44, 72.5], ["DEPT: CSE", 352.3, 45, 128]];

function Drawing() {
  return (
    <Sheet width="1850" height="767" viewBox="35 126 1850 767">
      {notes.map(([txt, ny, nx, nw]) => <text key={txt} className="note" x={nx} y={ny} textLength={nw} lengthAdjust="spacing">{txt}</text>)}
      {edges.map((k, n) => <path key={n} className="edge" d={poly(k)} />)}
      {dims.map((k, n) => (
        <g key={n}>
          {[...k.ext, ...k.seg].map((l, m) => <path key={m} className="edge" d={poly(l)} />)}
          {k.seg.map(([tip, from], m) => <path key={m} d={head(tip, from)} />)}
          <text className="dim" x={k.x} y={k.y} textLength={k.w} lengthAdjust="spacingAndGlyphs">{k.t}<tspan className="inch">″</tspan></text>
        </g>
      ))}
      <rect x="584" y="414" width="1.500" height="1.500" fill="#333" />
      <path className="edge" d="M622.500 283.500H717.500M670.500 236.500V331.500M666.500 279.500h8v8h-8z" />
      <path className="edge" d="M50.500 861.500h15.500v14.500H50.500zM58.200 861.500V777.500L50.500 796H65L58.200 777.500M58.200 777.500L54 796M58.200 777.500L62 796M66 868.700H148L130.300 862.300V876.300L148 868.700M148 868.700L130.300 865.500M148 868.700L130.300 872" />
      <text className="ucs" x="52" y="766" textLength="17" lengthAdjust="spacingAndGlyphs">Y</text>
      <text className="ucs" x="160" y="878" textLength="17" lengthAdjust="spacingAndGlyphs">X</text>
    </Sheet>
  );
}

/* ---------- data ---------- */
const menus = [["File", 29, 22], ["Edit", 18, 24], ["View", 18, 31], ["Insert", 18, 35.5], ["Format", 18.5, 46.5], ["Tools", 19, 32.5], ["Draw", 18.5, 33], ["Dimension", 17.5, 70.5], ["Modify", 18, 46.5], ["Express", 18, 48], ["Window", 18, 55], ["Help", 18, 30]];
const leftTools = ["line", "xline", "pline", "polygon", "rect", "arc", "circle", "cloud", "spline", "ellipse", "earc", "insert", "mblock", "point", "hatch", "gradient", "region", "table", "mtext"];
const rightTools = ["erase", "copy2", "mirror", "offset", "array", "move", "rotate", "scale", "stretch", "trim", "extend", "breakpt", "brk", "join", "chamfer", "fillet", "explode"];
const toggles = [["SNAP", 41, 5, 37], ["GRID", 38, 6, 34.5], ["ORTHO", 53, 5.5, 49], ["POLAR", 49, 5.5, 45], ["OSNAP", 51, 5.5, 46, 1], ["OTRACK", 60, 5, 56, 1], ["DUCS", 43, 4.6, 37.5, 1], ["DYN", 34, 5.8, 28, 1], ["LWT", 33.6, 5, 29.5], ["MODEL", 52.5, 0, 47.5, 1]];

const Tools = ({ list }) => list.map((n, k) => n === "|" ? <Sep key={k} /> : <Cell key={k}><Icon n={n} /></Cell>);

/* ---------- taskbar drawings ---------- */
const S = ({ children, w = 30, h = 30 }) => <svg width={w} height={h} viewBox="0 0 30 30">{children}</svg>;
const taskApps = [
  { k: "start", el: <S><defs><linearGradient id="wi" x1="0" y1="0" x2="1" y2="1"><stop offset="0" stopColor="#6fdcfb" /><stop offset="1" stopColor="#159cf5" /></linearGradient></defs><path d="M.5 1h14v13.500H.500zM15.500 1h14v13.500h-14zM.5 15.500h14V29H.500zM15.500 15.500h14V29h-14z" fill="url(#wi)" /></S> },
  { k: "search", el: <S><circle cx="14" cy="13" r="10" fill="#54464b" stroke="#f3f3f3" strokeWidth="2.800" /><path d="M21.500 20.500l6 7" stroke="#e8e8e8" strokeWidth="3.400" strokeLinecap="round" /></S> },
  { k: "view", el: <S><rect x="0" y="8" width="22" height="20" fill="#6a6566" /><rect x="7" y="1" width="23" height="20" fill="#f2f2f2" /><rect x="7" y="8" width="15" height="13" fill="#bdbbbb" /></S> },
  { k: "mail", badge: "1", el: <S><path d="M0 11L14 1l16 10v18H0z" fill="#0f57a8" /><path d="M3 9h24v10H3z" fill="#f1f4f8" /><path d="M0 11l15 10L30 11v18H0z" fill="#2bb2ee" /><path d="M0 29l30-18v18z" fill="#1493dc" /></S> },
  { k: "files", run: 1, el: <S><path d="M0 4q0-2 2-2h8l4 4h14q2 0 2 2v10H0z" fill="#e3a008" /><path d="M0 9q0-1 2-1h9l3-2h16v21q0 2-2 2H2q-2 0-2-2z" fill="#ffcf48" /><path d="M5 29v-5q0-3 3-3h14q3 0 3 3v5z" fill="#1b7cd6" /><path d="M9 25h12" stroke="#0b4c95" strokeWidth="2" /></S> },
  { k: "chrome", el: <S><circle cx="15" cy="15" r="15" fill="#fbbc05" /><path d="M15 15L2 7.500A15 15 0 0015 30l6-11.500z" fill="#34a853" /><path d="M15 8h13.300L28 7.500A15 15 0 002 7.500L8 17z" fill="#e94235" /><circle cx="15" cy="15" r="7.500" fill="#fff" /><circle cx="15" cy="15" r="5.800" fill="#4285f4" /></S> },
  { k: "store", el: <S><path d="M9 7V1h12v6" fill="none" stroke="#36b6ef" strokeWidth="2" /><path d="M1 6h28v19q0 4-4 4H5q-4 0-4-4z" fill="#f6f6f6" /><path d="M9 12h5.500v5.500H9z" fill="#f25022" /><path d="M15.500 12H21v5.500h-5.500z" fill="#7fba00" /><path d="M9 18.500h5.500V24H9z" fill="#00a4ef" /><path d="M15.500 18.500H21V24h-5.500z" fill="#ffb900" /></S> },
  { k: "spotify", el: <Round $bg="#111"><FaSpotify size={30} color="#1ed760" /></Round> },
  { k: "qb", el: <S><circle cx="15" cy="15" r="14.300" fill="#3f80d0" stroke="#b8d4f2" strokeWidth="1.400" /><text x="15" y="20.500" textAnchor="middle" fontFamily="Open Sans, sans-serif" fontSize="19" fontWeight="300" fill="#fff" textLength="22" lengthAdjust="spacingAndGlyphs">qb</text></S> },
  { k: "ut", el: <S><circle cx="15" cy="15" r="15" fill="#6cae3c" /><path d="M0 15a15 15 0 0130-2C20 6 10 8 0 15z" fill="#8bc863" /><text x="15.500" y="20.500" textAnchor="middle" fontFamily="Liberation Sans, sans-serif" fontSize="26" fontWeight="700" fill="#fff" stroke="#fff" textLength="21" lengthAdjust="spacingAndGlyphs" transform="rotate(-8 15 15)">µ</text></S> },
  { k: "fb", el: <Round $bg="linear-gradient(#19aaff,#0866f0)" $align="flex-end"><FaFacebookF size={25} /></Round> },
  { k: "msg", el: <S><defs><linearGradient id="ms" x1=".2" y1="1" x2=".8" y2="0"><stop offset="0" stopColor="#0a90ff" /><stop offset=".5" stopColor="#a040ff" /><stop offset="1" stopColor="#ff6a68" /></linearGradient></defs><path d="M15 0C6.500 0 0 6 0 14.200c0 4.600 2 8.300 5 10.800V30l5-2.400c1.600.5 3.200.7 5 .7 8.500 0 15-6 15-14.100S23.500 0 15 0z" fill="url(#ms)" /><path d="M6 18l7-7.500 4 4 7-4-7 7.500-4-4z" fill="#fff" stroke="#fff" strokeLinejoin="round" /></S> },
  { k: "insta", el: <Round $r="0" $bg="radial-gradient(circle at 25% 105%, #fdd35a 0, #fb7a35 28%, #e0307a 55%, #9a35bd 80%, #5b4fd0 100%)"><FaInstagram size={27} /></Round> },
  { k: "wa", badge: "6", el: <S><path d="M0 30l2-8A15 15 0 1115 30a15 15 0 01-7-2z" fill="#fff" /><path d="M3 27l1.500-5.500A12.500 12.500 0 118.500 25.600z" fill="#34c759" /><path d="M9 8c2-2 3 0 4 3l-1.500 2c1 2 3 4 5.500 5l2-2c3 1 4 2 3 4-2 4-7 2-10-1s-5-7-3-11z" fill="#fff" /></S> },
  { k: "dc", el: <Round $bg="#5865f2"><FaDiscord size={19} /></Round> },
  { k: "teams", el: <S><circle cx="24" cy="7" r="3.500" fill="#5059c9" /><path d="M19 12h10v9a6 6 0 01-8 5z" fill="#5059c9" /><circle cx="16" cy="5.500" r="4.800" fill="#7b83eb" /><path d="M9 12h14v10a7 7 0 01-14 3z" fill="#7b83eb" /><rect x="0" y="7" width="16" height="16" rx="1.500" fill="#4b53bc" /><text x="8" y="19" textAnchor="middle" fontFamily="Liberation Sans, sans-serif" fontWeight="700" fontSize="12" fill="#fff">T</text></S> },
  { k: "blocks", el: <S><path d="M2 1l13 .5V14L2 15z" fill="#df2a23" /><path d="M16.500 1.500L28 2v11.500l-11.500.5z" fill="#3fb52a" /><path d="M3 16l12-.5v12L4 29z" fill="#c4b822" /><path d="M16.500 15.500L28 15v10l-11.500 2.500z" fill="#4a18b0" /></S> },
  { k: "npp", el: <S><path d="M2 3l19-1 3 26-22 1z" fill="#f4f7f0" stroke="#8a9a82" strokeWidth=".8" /><path d="M3 15l18-1 1 12-19 2z" fill="#7fd33d" /><path d="M5 18c2-5 3-3 5-4 1-5 5-6 7-3 3 3 1 8-3 8s-8 2-9-1z" fill="#c4ef8e" stroke="#27571c" /><path d="M10 14h8M13 20l5 3" stroke="#27571c" /><path d="M3 4h18" stroke="#555" strokeWidth="2" strokeDasharray="1 1.500" /><path d="M28 2l-6 18-1 3" stroke="#e2a43a" strokeWidth="2.400" /></S> },
  { k: "code", el: <S><path d="M23 8L3 24.500 0 21.500 20 1z" fill="#1a7fc4" /><path d="M23 22L3 5.500 0 8.500 20 29z" fill="#2191db" /><path d="M20 1l2.500-1L30 3.500v23L22.500 30 20 29l3-2V3z" fill="#2ba3ee" /></S> },
  { k: "chip", el: <S><rect x="0" y="1" width="30" height="29" fill="#a5a5a5" /><rect x="1" y="2" width="26" height="25" fill="#c3c3c3" /><path d="M5 3h13v15H5z" fill="#111" strokeWidth="2" stroke="#111" strokeDasharray="1.500 1" /><rect x="6" y="6" width="10" height="9" fill="#0ff" /><path d="M19 10h5V4h4M20 4v6" fill="none" stroke="#e01b1b" strokeWidth="1.500" /><path d="M22 27V18h5" fill="none" stroke="#1515d8" strokeWidth="1.600" /><path d="M2 19h8M2 23h6v5" stroke="#fff" fill="none" strokeWidth="1.500" /><path d="M12 15l8 7-3 1 2 4-3 1-2-4-2 2z" /></S> },
  { k: "acad", active: 1, el: <AcadLogo w={30} h={30} /> },
  { k: "vlc", el: <S><path d="M5 21h20l3 8H2z" fill="#f28a12" /><path d="M13 1h4l6.500 21q-8.500 5-17 0z" fill="#f28a12" /><path d="M11.500 7h7l1.800 5.500q-5 2-10.500 0z" fill="#f3f3f3" /><path d="M8.500 16.500q6.500 3 13 0l1.500 5q-8 4-16 0z" fill="#ececec" /></S> },
  { k: "photos", run: 1, el: <S><defs><linearGradient id="ph" x1="0" y1="1" x2="1" y2="0"><stop offset="0" stopColor="#0f66c0" /><stop offset=".5" stopColor="#1f83da" /><stop offset="1" stopColor="#7e4fb5" /></linearGradient><clipPath id="pc"><rect x="2" y="2" width="26" height="27" rx="3" /></clipPath></defs><rect x="2" y="2" width="26" height="27" rx="3" fill="url(#ph)" /><g clipPath="url(#pc)"><path d="M1 25l13-13q2-2 4 0l14 14v5H1z" fill="#1560b8" /><path d="M1 25l13-13q2-2 4 0l2 2L6 29H1z" fill="#3cc2f0" /></g><circle cx="22" cy="7" r="2.500" fill="#eaf4ff" /></S> },
];

const SelectText = ({ label, ...r }) => <Fit size={14} font={sans} {...r}>{label}</Fit>;

export default function App() {
  return (
    <Screen>
      <Global />
      <TitleBar>
        <AcadLogo w={18} h={19} plain />
        <TitleText><Fit w={642} size={15.5}>{"AutoCAD 2007 - [C:\\Users\\Tazwar\\Desktop\\Study\\Fourth Semester\\CAD\\CAD PRACTICE\\M3.dwg]"}</Fit></TitleText>
        <WindowButtons>
          <WindowButton><svg width="12" height="12"><path d="M0 5.500h12" stroke="#111" strokeWidth="1.400" /></svg></WindowButton>
          <WindowButton><svg width="13" height="13" viewBox="0 0 13 13"><rect x=".7" y="3" width="9" height="9" rx="1.500" fill="none" stroke="#111" strokeWidth="1.400" /><path d="M3 1h6.500Q12 1 12 3.500V10" fill="none" stroke="#111" strokeWidth="1.400" /></svg></WindowButton>
          <WindowButton><svg width="13" height="13"><path d="M.5 .5l12 12M12.500 .5l-12 12" stroke="#111" strokeWidth="1.300" /></svg></WindowButton>
        </WindowButtons>
      </TitleBar>
      <MenuBar>
        <svg width="20" height="19" viewBox="0 0 20 19"><path d="M3 1h10l5 6v9H3z" fill="#34557e" /><path d="M2 2l3 5M6 1v6M2 6h7" stroke="#fff" /><path d="M0 12l9-5 2 3 8 1v8H0z" fill="#f3c52e" stroke="#c48a12" strokeWidth=".6" /></svg>
        {menus.map(([m, gap, w], k) => <MenuItem key={m} $gap={k ? gap : 9}><Fit w={w} size={15} color="#1c1c2c">{m}</Fit></MenuItem>)}
        <DocButtons>
          <DocButton><svg width="9" height="12"><path d="M0 10.500h8" stroke="#76859a" strokeWidth="2.400" /></svg></DocButton>
          <DocButton><svg width="11" height="11" viewBox="0 0 11 11"><path d="M4 4V1h6v5H8M1 5h6v5H1z" fill="none" stroke="#76859a" strokeWidth="1.500" /></svg></DocButton>
          <DocButton><svg width="10" height="10"><path d="M1 1l8 8M9 1L1 9" stroke="#6c7b90" strokeWidth="2.600" /></svg></DocButton>
        </DocButtons>
      </MenuBar>

      <ToolRow $top={2}>
        <Toolbar $w={817}>
          <Grip />
          <Tools list={["newf", "open", "save", "|", "print", "preview", "publish", "globe", "|", "cut", "copy", "paste", "match", "block", "|", "undo"]} />
          <Cell $w={18}><Tri color="#16168c" /></Cell><Cell><Icon n="redo" /></Cell><Cell $w={16}><Tri color="#b5b5b5" /></Cell>
          <Tools list={["|", "pan", "zoomrt", "zoomwin", "zoomprev", "|", "props", "dcenter", "toolpal", "sheet", "markup", "calc", "|", "help"]} />
        </Toolbar>
        <Toolbar $w={498.5}>
          <Grip $w={16} $pad={5} /><Cell $w={31}><Icon n="tstyle" /></Cell>
          <Select $w={124}><SelectText label="Standard" w={53} /><Chevron><Down /></Chevron></Select>
          <Sep /><Cell $w={29}><Icon n="dstyle" size={22} /></Cell>
          <Select $w={124}><SelectText label="Standard" w={53} /><Chevron><Down /></Chevron></Select>
          <Sep /><Cell $w={30}><Icon n="tbstyle" /></Cell>
          <Select $w={124}><SelectText label="Standard" w={53} /><Chevron><Down /></Chevron></Select>
        </Toolbar>
      </ToolRow>
      <ToolRow>
        <Toolbar $w={297.5}>
          <Grip $w={16.5} />
          <Select $w={218} $pad={9}><SelectText label="AutoCAD Classic" w={100} /><Chevron><Down /></Chevron></Select>
          <Cell $w={29}><Icon n="gear" size={21} /></Cell><Cell $w={29}><Icon n="home" size={21} /></Cell>
        </Toolbar>
        <Toolbar $w={484}>
          <Grip $w={16} $pad={5} /><Cell $w={30}><Icon n="layers" /></Cell>
          <Select $w={375} $pad={3.5}>
            <Cell $w={20}><Icon n="bulb" size={18} h={19} /></Cell><Cell $w={20}><Icon n="sun" size={18} h={18} /></Cell><Cell $w={21}><Icon n="vp" size={19} h={19} /></Cell><Cell $w={21}><Icon n="lock" size={20} h={20} /></Cell>
            <Gap $w={2} /><Swatch /><Gap $w={6} /><SelectText label="0" w={8} /><Chevron><Down /></Chevron>
          </Select>
          <Cell $w={28}><Icon n="layprev" size={22} /></Cell><Cell $w={30}><Icon n="layback" size={22} /></Cell>
        </Toolbar>
        <Toolbar $w={737.5}>
          <Grip $w={17.5} $pad={6} />
          <Select $w={187} $pad={6}><Swatch /><Gap $w={5} /><SelectText label="ByLayer" w={48} /><Chevron><Down /></Chevron></Select>
          <Sep />
          <Select $w={199.5} $pad={5}><LineSample $w={75} /><Gap $w={6} /><SelectText label="ByLayer" w={48} /><Chevron><Down /></Chevron></Select>
          <Sep />
          <Select $w={156} $pad={5}><LineSample $w={44} /><Gap $w={6} /><SelectText label="ByLayer" w={48} /><Chevron><Down /></Chevron></Select>
          <Sep />
          <Select $w={150} $pad={10} $off><SelectText label="ByColor" w={46} color="#868686" /><Chevron><Down color="#c0c0c0" /></Chevron></Select>
        </Toolbar>
      </ToolRow>

      <Work>
        <Dock $w={33}>
          <SideBar $w={31} $h={544}>
            <SideGrip />
            {leftTools.map(n => <SideCell key={n}><Icon n={n} size={20} h={20} /></SideCell>)}
          </SideBar>
        </Dock>
        <Center>
          <Canvas><Drawing /></Canvas>
          <TabsRow>
            {["M4 0v11M13 0v11L7 5.500z", "M11 0v11L5 5.500z", "M6 0v11l6-5.500z", "M5 0v11l6-5.500zM13 0v11"].map(k => (
              <NavBtn key={k}><svg width="15" height="11"><path d={k} fill="#000" stroke="#000" strokeWidth={k.includes("4 0v11M") || k.includes("M13") ? 1.2 : 0} /></svg></NavBtn>
            ))}
            <Gap $w={3} />
            <Tab $w={56}><svg width="62" height="20"><path d="M1 0l6 19h46l5-19z" fill="#fff" /><path d="M1 0l6 19h46l5-17" fill="none" stroke="#111" strokeWidth="1.500" /></svg><TabLabel $pad={11}><Fit size={14} font={sans} w={36} lh={18}>Model</Fit></TabLabel></Tab>
            <Tab $w={63}><svg width="66" height="20"><path d="M0 13l2 6h58l5-18" fill="none" stroke="#111" strokeWidth="1.500" /></svg><TabLabel $pad={6}><Fit size={14} font={sans} w={47} lh={18}>Layout1</Fit></TabLabel></Tab>
            <Tab $w={66}><svg width="66" height="20"><path d="M0 13l2 6h56l5-18" fill="none" stroke="#111" strokeWidth="1.500" /></svg><TabLabel $pad={5}><Fit size={14} font={sans} w={48} lh={18}>Layout2</Fit></TabLabel></Tab>
          </TabsRow>
        </Center>
        <Dock $w={35} $pad={5}>
          <SideBar $w={30} $h={488.5} $top={3}>
            <SideGrip $h={10.5} />
            {rightTools.map(n => <SideCell key={n} $h={27.5}><Icon n={n} size={20} h={20} /></SideCell>)}
          </SideBar>
          <SideBar $w={30} $h={132} $top={3}>
            <SideGrip $h={12.5} />
            {["front", "back", "above", "under"].map(n => <SideCell key={n} $h={27.5}><Icon n={n} size={20} h={20} /></SideCell>)}
          </SideBar>
        </Dock>
      </Work>

      <Splitter />
      <CommandDock>
        <CommandGrip />
        <CommandBox>
          <CommandLine $h={29.5} $rule>
            <CommandText $top={1}><Fit w={209} size={15.5} font={`"Liberation Mono", monospace`}>Dimension text = 2.0"</Fit></CommandText>
            <ScrollEnd $w={21} />
          </CommandLine>
          <CommandLine $h={23}>
            <CommandText $top={2.5}><Fit w={78.5} size={15.5} font={`"Liberation Mono", monospace`}>Command:</Fit></CommandText><Caret />
            <ScrollEnd $w={108} $j="flex-start"><ScrollThumb /></ScrollEnd>
          </CommandLine>
        </CommandBox>
      </CommandDock>
      <StatusBar>
        <Coords><Fit w={138} size={14.5} font={sans}>{"1'-8.7\",  3'-2.9\" , 0'-0.0\""}</Fit></Coords>
        {toggles.map(([label, w, gap, tw, on]) => <Toggle key={label} $w={w} $gap={gap} $on={on}><Fit w={tw} size={14.5} font={sans}>{label}</Fit></Toggle>)}
        <Tray>
          <svg width="22" height="21" viewBox="0 0 22 21"><path d="M3 2c-1 7 3 9 9 8M3 2l9 8M7 7l5-5M4 19l4-9 3 9z" fill="#8fa7cf" stroke="#4c6391" strokeWidth="1.500" /><path d="M13 6l8 14H5z" fill="#ffdf1c" stroke="#a8890c" /><path d="M13 11v4.500M13 17v1.500" stroke="#111" strokeWidth="1.800" /></svg>
          <svg width="21" height="21" viewBox="0 0 21 21"><ellipse cx="7.500" cy="19" rx="7" ry="2" fill="#333" /><path d="M.5 9h14v9q-7 3-14 0z" fill="#e2c70f" stroke="#4c430a" /><path d="M5 9v9M10 9v9" stroke="#6d600b" strokeWidth="1.500" /><path d="M10 8c0-8 9-8 9 0v2" fill="none" stroke="#5b520c" strokeWidth="3.200" /><path d="M10 8c0-8 9-8 9 0v2" fill="none" stroke="#e2d23f" strokeWidth="1.300" /></svg>
        </Tray>
        <Cell $w={27}><svg width="12" height="16" viewBox="0 0 12 16"><path d="M0 8h9l-4.500 5.500z" /></svg></Cell>
        <svg width="20" height="20"><rect x="1" y="1" width="18" height="18" fill="#a9c7e6" stroke="#214f85" strokeWidth="2" /><rect x="4" y="4" width="12" height="12" fill="#dce9f6" stroke="#4f7fb5" /></svg>
      </StatusBar>

      <Taskbar>
        <Weather><svg width="34" height="32" viewBox="0 0 34 32"><defs><linearGradient id="moon" x1="0" y1="0" x2="1" y2="1"><stop offset="0" stopColor="#a8b4c0" /><stop offset="1" stopColor="#5e6872" /></linearGradient></defs><circle cx="14.500" cy="16" r="13" fill="url(#moon)" /><path d="M17 26a4.500 4.500 0 010-8 5 5 0 019-1 4.500 4.500 0 011 9z" fill="#eef2f6" /></svg></Weather>
        {taskApps.map(k => (
          <TaskItem key={k.k}>
            {k.active ? <Active>{k.el}</Active> : k.el}
            {k.badge && <Badge>{k.badge}</Badge>}
            {(k.run || k.active) && <Running $wide={k.active} />}
          </TaskItem>
        ))}
        <SysTray>
          <svg width="15" height="10" viewBox="0 0 15 10"><path d="M1 8.500l6.500-7 6.500 7" fill="none" stroke="#fff" strokeWidth="1.800" /></svg>
          <Gap $w={25} />
          <TwoLines $w={30}><Fit w={29} size={14.5}>ENG</Fit><Fit w={30} size={14.5}>INTL</Fit></TwoLines>
          <Gap $w={22} />
          <svg width="21" height="21" viewBox="0 0 21 21"><g fill="none" stroke="#fff" strokeWidth="1.400"><path d="M19 9A9 9 0 1010 19" /><path d="M10 1c-5 5-5 13-1 18M10 1c3 2 4 5 4 8M1.500 7h16.500M1.500 13h8" /><circle cx="15" cy="15" r="4.500" /><path d="M12 18l6-6" /></g></svg>
          <Gap $w={10} />
          <svg width="21" height="18" viewBox="0 0 21 18"><path d="M1 6.500h3L9 2v14l-5-4.500H1zM12 6q2 3 0 6M14.500 4q3.500 5 0 10M17 2q5 7 0 14" fill="none" stroke="#fff" strokeWidth="1.400" /></svg>
          <Gap $w={9} />
          <svg width="22" height="14" viewBox="0 0 22 14"><rect x="1" y="1" width="17" height="12" rx="3" fill="none" stroke="#fff" strokeWidth="1.500" /><rect x="3.500" y="3.500" width="9" height="7" rx="1" fill="#fff" /><path d="M20 4.500v5" stroke="#fff" strokeWidth="2.200" /></svg>
          <Gap $w={19} />
          <TwoLines $w={77} $a="flex-end"><Fit w={54} size={14.5}>3:22 PM</Fit><Fit w={77} size={14.5}>10/11/2023</Fit></TwoLines>
          <Gap $w={11} />
          <svg width="18" height="20" viewBox="0 0 18 20"><path d="M9 0a7 7 0 017 7v5l1.500 3q0 1-1 1h-15q-1 0-1-1L2 12V7a7 7 0 017-7zM6 17h6q-1 3-3 3t-3-3z" fill="#eebcf4" /></svg>
        </SysTray>
      </Taskbar>
    </Screen>
  );
}
